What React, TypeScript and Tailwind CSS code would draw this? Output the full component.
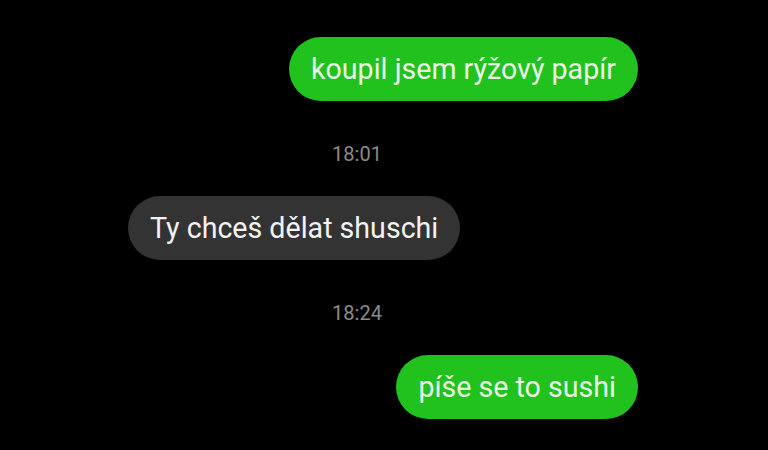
export default function App() {
  return (
    <div className="w-[768px] h-[450px] bg-black overflow-hidden" style={{ fontFamily: 'Roboto, "Noto Sans", sans-serif' }}>
      <div className="w-[510px] ml-[128px] pt-[37px] flex flex-col">
        {/* outgoing */}
        <div className="flex justify-end">
          <div className="h-[64px] px-[22px] rounded-full bg-[#22c21e] text-[#e8f5e3] text-[28.6px] flex items-center">
            koupil jsem rýžový papír
          </div>
        </div>

        <div className="mt-[42px] mb-[31px] h-[22px] leading-[22px] text-[20px] text-[#8b8b8b] text-center mr-[52px]">18:01</div>

        {/* incoming */}
        <div className="flex justify-start">
          <div className="h-[64px] px-[22px] rounded-full bg-[#333333] text-[#f2f2f2] text-[28.6px] flex items-center">
            Ty chceš dělat shuschi
          </div>
        </div>

        <div className="mt-[42px] mb-[31px] h-[22px] leading-[22px] text-[20px] text-[#8b8b8b] text-center mr-[52px]">18:24</div>

        {/* outgoing */}
        <div className="flex justify-end">
          <div className="h-[64px] px-[22px] rounded-full bg-[#22c21e] text-[#e8f5e3] text-[28.6px] flex items-center">
            píše se to sushi
          </div>
        </div>
      </div>
    </div>
  )
}
